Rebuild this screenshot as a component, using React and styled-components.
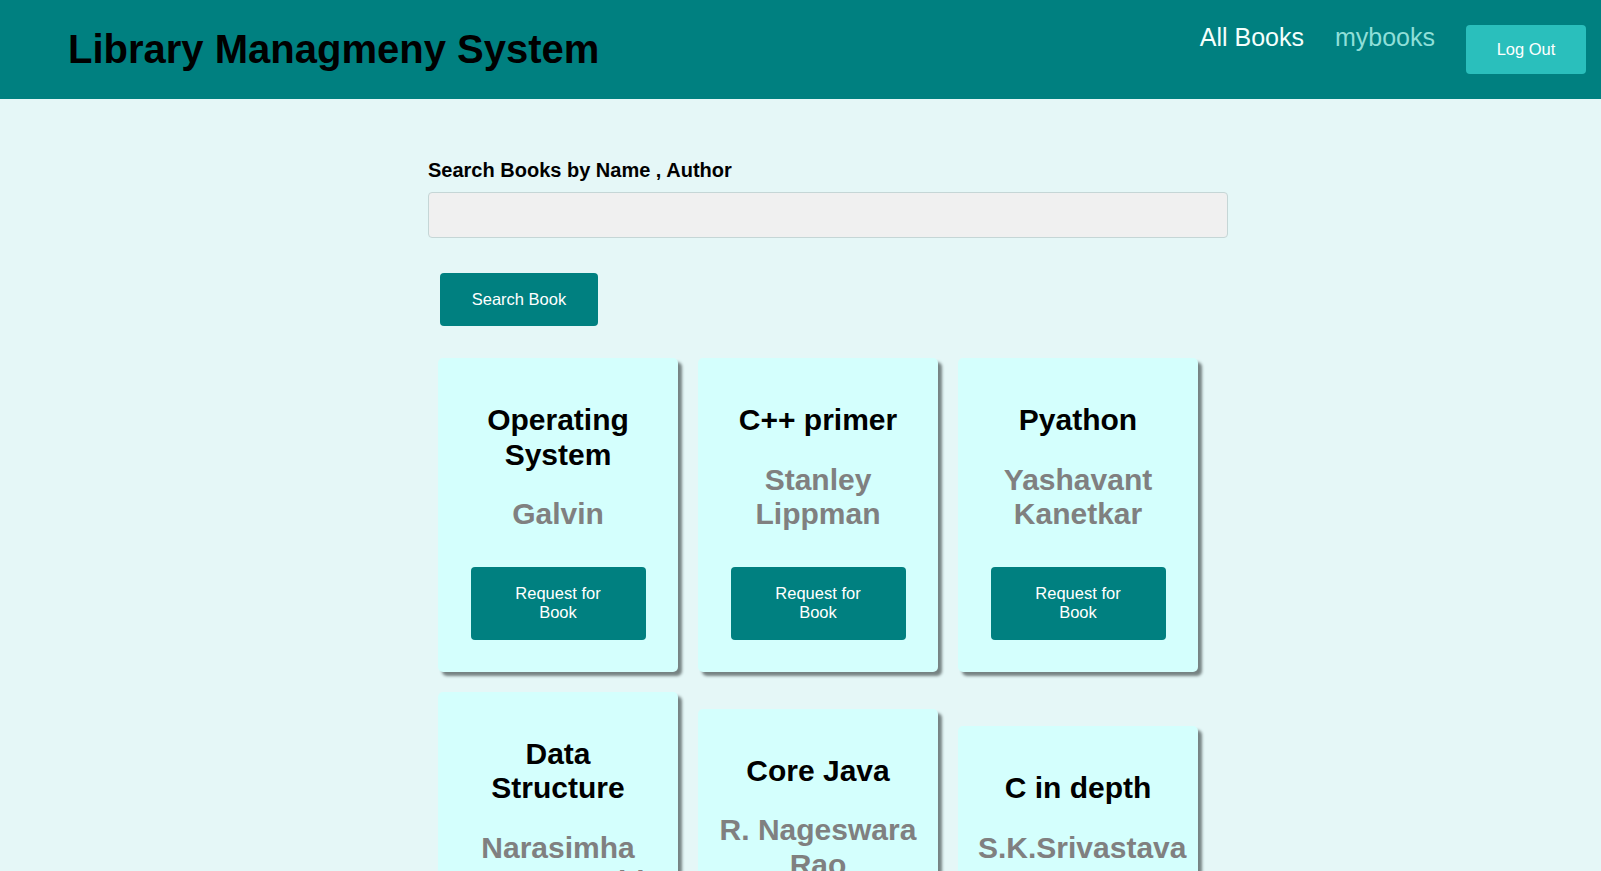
import React from "react";
import styled, { createGlobalStyle } from "styled-components";

const Global = createGlobalStyle`
  html, body { margin: 0; padding: 0; }
  body {
    background: #e5f7f7;
    font-family: "Liberation Sans", Arial, sans-serif;
    overflow: hidden;
  }
`;

const Header = styled.header`
  height: 99px;
  background: #008080;
  display: flex;
  align-items: center;
  justify-content: space-between;
  padding: 0 15px 0 68px;
  box-sizing: border-box;
`;

const Title = styled.h1`
  margin: 0;
  font-size: 40px;
  font-weight: bold;
  color: #000;
`;

const Nav = styled.nav`
  display: flex;
  align-items: center;
`;

const NavLink = styled.a`
  font-size: 25px;
  color: ${(p) => (p.$active ? "#f4fffc" : "#8fdfd8")};
  text-decoration: none;
  margin: 0 31px 25px 0;
  line-height: 29px;
  cursor: pointer;
`;

const LogOut = styled.button`
  width: 120px;
  height: 49px;
  border: none;
  border-radius: 4px;
  background: #2abfbc;
  color: #fff;
  font-family: inherit;
  font-size: 16.5px;
  cursor: pointer;
`;

const Main = styled.main`
  width: 800px;
  margin: 0 auto;
  padding: 60px 0 0 55px;
`;

const Label = styled.label`
  display: block;
  font-size: 20px;
  font-weight: bold;
  line-height: 23px;
  color: #000;
  margin-bottom: 10px;
`;

const SearchInput = styled.input`
  display: block;
  width: 800px;
  height: 46px;
  box-sizing: border-box;
  background: #f0f0f0;
  border: 1px solid #c5d6d6;
  border-radius: 4px;
  font-family: inherit;
  font-size: 16px;
  padding: 0 12px;
`;

const SearchButton = styled.button`
  display: block;
  margin: 35px 0 22px 12px;
  width: 158px;
  height: 53px;
  border: none;
  border-radius: 4px;
  background: #008080;
  color: #fff;
  font-family: inherit;
  font-size: 16.5px;
  cursor: pointer;
`;

const Grid = styled.div`
  display: flex;
  flex-wrap: wrap;
  align-items: center;
  width: 800px;
`;

const Card = styled.div`
  width: 240px;
  margin: 10px;
  box-sizing: border-box;
  background: #d4fffd;
  border-radius: 5px;
  box-shadow: 4px 4px 3px #768383;
  text-align: center;
  padding: 20px 20px 32px;
`;

const BookName = styled.h2`
  margin: 25px 0;
  font-size: 30px;
  line-height: 34.5px;
  font-weight: bold;
  color: #000;
`;

const Author = styled.h2`
  margin: 25px 0 35px;
  font-size: 30px;
  line-height: 34.5px;
  font-weight: bold;
  color: #808080;
`;

const RequestButton = styled.button`
  display: block;
  margin: 0 auto;
  width: 175px;
  height: 73px;
  border: none;
  border-radius: 4px;
  background: #008080;
  color: #fff;
  font-family: inherit;
  font-size: 16.5px;
  line-height: 19.5px;
  padding: 0 43px;
  cursor: pointer;
`;

const books = [
  { name: "Operating System", author: "Galvin" },
  { name: "C++ primer", author: "Stanley Lippman" },
  { name: "Pyathon", author: "Yashavant Kanetkar" },
  { name: "Data Structure", author: "Narasimha Karumanchi" },
  { name: "Core Java", author: "R. Nageswara Rao" },
  { name: "C in depth", author: "S.K.Srivastava" },
];

export default function App() {
  return (
    <>
      <Global />
      <Header>
        <Title>Library Managmeny System</Title>
        <Nav>
          <NavLink $active>All Books</NavLink>
          <NavLink>mybooks</NavLink>
          <LogOut>Log Out</LogOut>
        </Nav>
      </Header>
      <Main>
        <Label htmlFor="search">Search Books by Name , Author</Label>
        <SearchInput id="search" type="text" />
        <SearchButton>Search Book</SearchButton>
        <Grid>
          {books.map((b) => (
            <Card key={b.name}>
              <BookName>{b.name}</BookName>
              <Author>{b.author}</Author>
              <RequestButton>Request for Book</RequestButton>
            </Card>
          ))}
        </Grid>
      </Main>
    </>
  );
}
